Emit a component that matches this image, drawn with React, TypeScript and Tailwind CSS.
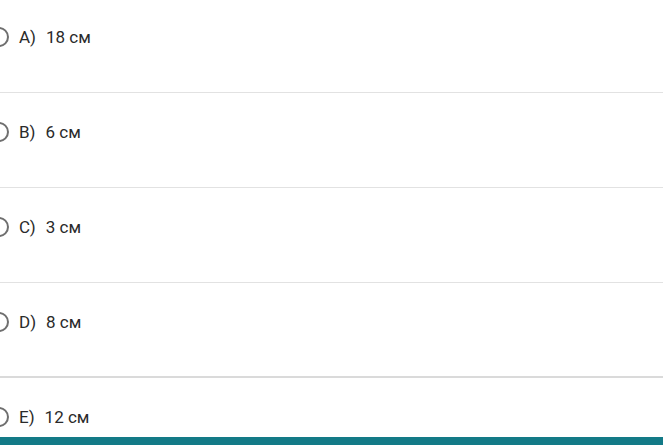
const options = [
  { key: "A", text: "18 см" },
  { key: "B", text: "6 см" },
  { key: "C", text: "3 см" },
  { key: "D", text: "8 см" },
  { key: "E", text: "12 см" },
];

export default function App() {
  return (
    <div className="relative h-[445px] w-[663px] overflow-hidden bg-white font-['Roboto',sans-serif] text-[17px] text-[#2a2a2a]">
      <div className="-mt-[2px] flex flex-col">
        {options.map((o, i) => (
          <div
            key={o.key}
            className={
              "flex items-center pt-[27px] " +
              (i === 3
                ? "pb-[42px] border-b-2 border-[#dadada]"
                : i < 3
                  ? "pb-[43px] border-b border-[#e2e2e2]"
                  : "pb-[43px]")
            }
          >
            <div className="-ml-[11px] h-5 w-5 shrink-0 rounded-full border-2 border-[#6f6f6f]" />
            <span className="ml-[10px] leading-6">{o.key})</span>
            <span className="ml-[10px] leading-6">{o.text}</span>
          </div>
        ))}
      </div>
      <div className="absolute bottom-0 left-0 h-[8px] w-full bg-[#137a87]" />
    </div>
  );
}
